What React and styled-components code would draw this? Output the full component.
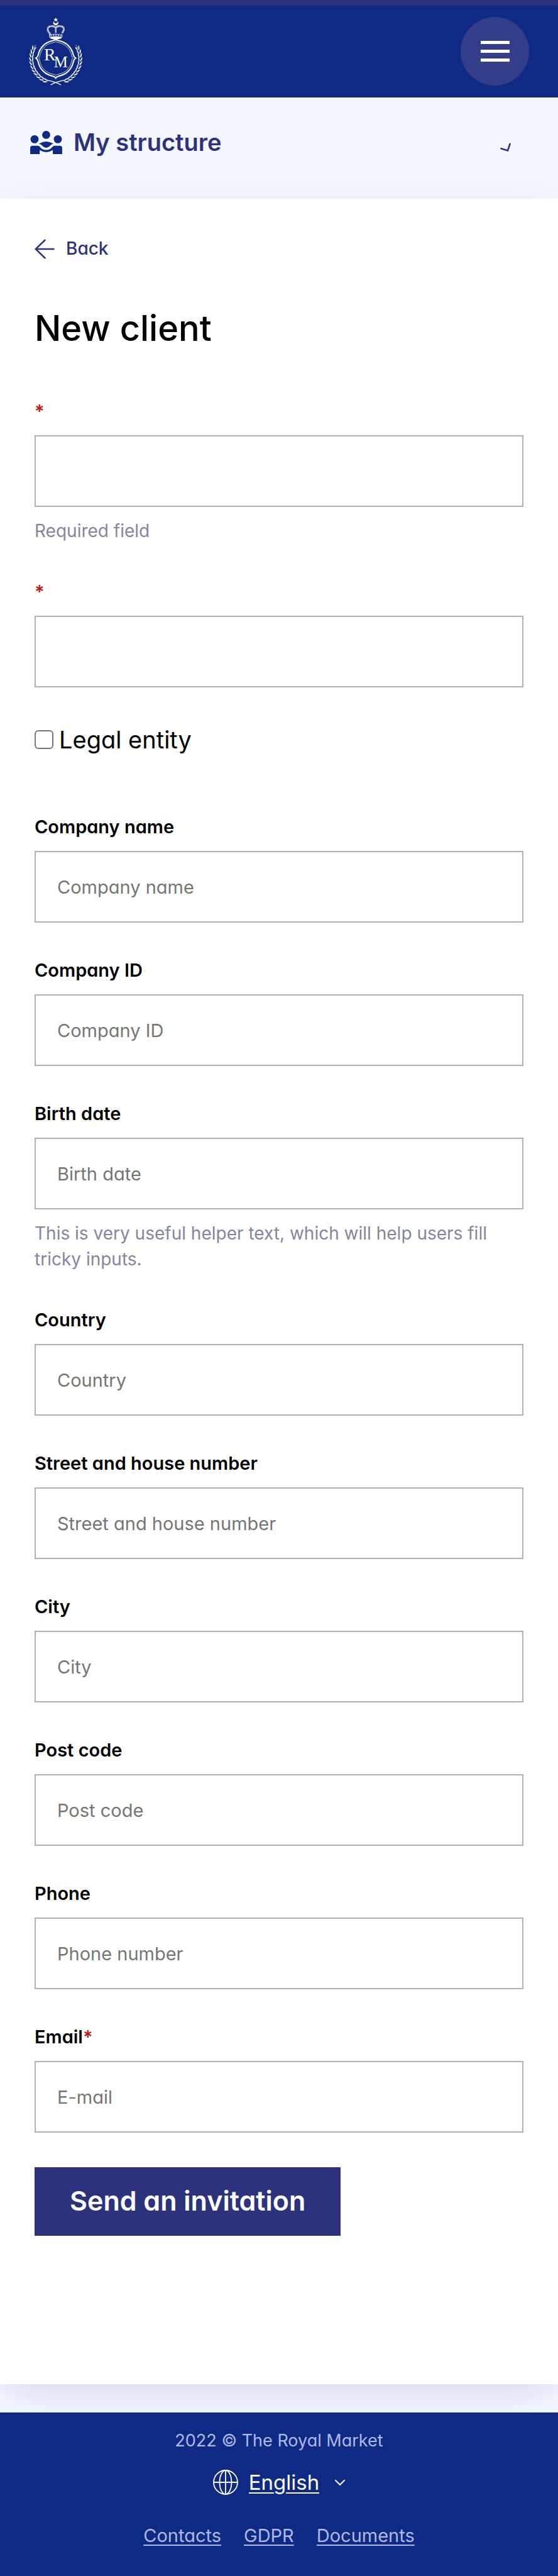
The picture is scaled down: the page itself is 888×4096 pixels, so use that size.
import React from "react";
import styled, { createGlobalStyle } from "styled-components";

const color = {
  navy: "#0f2a84",
  indigo: "#2c337c",
  disc: "#333d89",
  page: "#f4f7ff",
  line: "#b0b0b0",
  muted: "#84869f",
  footerText: "#afb9e3",
  required: "#c11717",
};

const GlobalStyle = createGlobalStyle`
  *, *::before, *::after { box-sizing: border-box; }
  body {
    margin: 0;
    background: ${color.page};
    color: #000;
    font-family: Inter, "Open Sans", sans-serif;
    font-feature-settings: "cv11";
    font-size: 28px;
    line-height: 41px;
  }
  input, button, select { font: inherit; font-feature-settings: inherit; margin: 0; }
`;

const Header = styled.header`
  display: flex;
  align-items: center;
  justify-content: space-between;
  padding: 18px 46px 19px;
  border-top: 9px solid ${color.indigo};
  background: ${color.navy};
`;

const HomeLink = styled.a`
  display: flex;
  color: #fff;
`;

const MenuButton = styled.button`
  display: flex;
  flex-direction: column;
  align-items: center;
  justify-content: center;
  gap: 9px;
  width: 109px;
  height: 109px;
  padding: 0;
  border: 0;
  border-radius: 50%;
  background: ${color.disc};
`;

const MenuBar = styled.span`
  width: 46px;
  height: 5px;
  background: #fff;
`;

const SectionBar = styled.div`
  display: flex;
  align-items: center;
  padding: 43px 46px 62px 48px;
  color: ${color.navy};
`;

const SectionTitle = styled.h2`
  flex: 1;
  margin: 0 0 0 18px;
  color: ${color.indigo};
  font-size: 38px;
  font-weight: 600;
  line-height: 56px;
`;

const Card = styled.main`
  padding: 59px 55px 236px;
  margin-bottom: 45px;
  background: #fff;
  box-shadow: 0 16px 58px -10px rgba(44, 51, 124, 0.18);
`;

const BackLink = styled.a`
  display: inline-flex;
  align-items: center;
  gap: 18px;
  color: ${color.indigo};
  font-weight: 500;
  text-decoration: none;
  vertical-align: top;
`;

const PageTitle = styled.h1`
  margin: 66px 0 71px;
  font-size: 56px;
  font-weight: 500;
  line-height: 80px;
`;

const Form = styled.form`
  display: flex;
  flex-direction: column;
  align-items: stretch;
  gap: 55px;
`;

const Field = styled.div`
  display: flex;
  flex-direction: column;
  gap: 18px;
`;

const Label = styled.label`
  font-size: 29px;
  font-weight: 600;
`;

const Required = styled.span`
  color: ${color.required};
`;

const TextInput = styled.input`
  width: 100%;
  height: 114px;
  padding: 0 34px;
  border: 2px solid ${color.line};
  border-radius: 0;
  background: #fff;
  font-size: 29px;
  &::placeholder { color: #757575; opacity: 1; }
`;

const Hint = styled.p`
  margin: 0;
  color: ${color.muted};
`;

const CheckRow = styled.label`
  display: flex;
  align-items: center;
  gap: 9px;
  margin-bottom: 35px;
  font-size: 38px;
  line-height: 56px;
`;

const Checkbox = styled.input`
  appearance: none;
  width: 30px;
  height: 30px;
  border: 2px solid #767676;
  border-radius: 6px;
  background: #fff;
  &:checked { background: ${color.indigo}; }
`;

const SubmitButton = styled.button`
  align-self: flex-start;
  padding: 25px 56px 27px;
  border: 0;
  background: ${color.indigo};
  color: #fff;
  font-size: 43px;
  font-weight: 600;
  line-height: 57px;
`;

const Footer = styled.footer`
  display: flex;
  flex-direction: column;
  align-items: center;
  padding: 24px 46px 44px;
  background: ${color.navy};
  color: ${color.footerText};
`;

const Copyright = styled.p`
  margin: 0;
  font-size: 27px;
`;

const Language = styled.div`
  display: flex;
  align-items: center;
  margin: 22px 0 40px;
  color: #fff;
`;

const LanguageSelect = styled.select`
  appearance: none;
  field-sizing: content;
  margin: 0 25px 0 17px;
  padding: 0;
  border: 0;
  background: transparent;
  color: inherit;
  font-size: 33px;
  line-height: 48px;
  text-decoration: underline;
  text-decoration-thickness: 2px;
  text-underline-offset: 4px;
`;

const FooterLinks = styled.nav`
  display: flex;
  gap: 36px;
`;

const FooterLink = styled.a`
  color: inherit;
  font-size: 29px;
  text-decoration-thickness: 2px;
  text-underline-offset: 4px;
`;

const WREATH = Array.from({ length: 11 }, (_, i) => 111 + i * 9);

function Wreath() {
  return (
    <g>
      {WREATH.map((deg) => {
        const rad = (deg * Math.PI) / 180;
        const x = 229 + 152 * Math.cos(rad);
        const y = 306 + 152 * Math.sin(rad);
        return (
          <g key={deg} transform={`translate(${x} ${y}) rotate(${deg - 180})`}>
            <path d="M-1 4Q-16 -6 -13 -29Q-2 -16 -1 4Z" />
            <path d="M3 4Q0 -14 12 -27Q14 -9 3 4Z" />
          </g>
        );
      })}
      <path d="M92 240Q94 228 104 219" fill="none" stroke="currentColor" strokeWidth="3" />
      <path d="M170 440Q222 448 261 470" fill="none" stroke="currentColor" strokeWidth="5" />
    </g>
  );
}

const CROWN_ARCHES =
  "M193 148Q181 136 178 122Q178 101 204 101Q223 101 229 110Q235 101 254 101Q280 101 280 122Q277 136 265 148";

function Logo() {
  return (
    <svg width="86" height="108" viewBox="60 48 340 426" fill="currentColor" role="img" aria-label="The Royal Market">
      <path d="M229 47l4 9 10 1-8 6 3 10-9-6-9 6 3-10-8-6 10-1z" />
      <path d="M216 70A16 16 0 1 0 242 70A12 12 0 1 1 216 70Z" />
      <g fill="none" stroke="currentColor">
        <path d={CROWN_ARCHES} strokeWidth="12" strokeLinecap="round" strokeDasharray="0 10" />
        <path d={CROWN_ARCHES} stroke={color.navy} strokeWidth="5" strokeLinecap="round" strokeDasharray="0 10" />
        <path d="M229 112V148" strokeWidth="10" strokeLinecap="round" strokeDasharray="0 9" />
        <path d="M229 112V148" stroke={color.navy} strokeWidth="4" strokeLinecap="round" strokeDasharray="0 9" />
        <path d="M189 156Q229 146 269 156M192 170Q229 160 266 170" strokeWidth="3" />
        <path d="M197 161Q229 154 261 161" strokeWidth="6" strokeDasharray="7 8" />
        <path d="M190 152V172M268 152V172" strokeWidth="4" />
        <path d="M229 186Q237 192 249 193A113 113 0 0 1 340 284Q344 297 354 302Q344 308 340 324A113 113 0 0 1 249 415Q235 418 229 428Q223 418 209 415A113 113 0 0 1 118 324Q114 308 104 302Q114 297 118 284A113 113 0 0 1 209 193Q221 192 229 186Z" strokeWidth="8" />
        <path d="M229 198Q236 204 247 205A101 101 0 0 1 329 286Q331 297 336 302Q331 308 329 322A101 101 0 0 1 247 403Q236 405 229 410Q222 405 211 403A101 101 0 0 1 129 322Q127 308 122 302Q127 297 129 286A101 101 0 0 1 211 205Q222 204 229 198Z" strokeWidth="3" />
      </g>
      <path d="M191 172Q229 162 267 172Q264 181 242 184L229 190L216 184Q194 181 191 172Z" />
      <g fontFamily="Liberation Serif, serif">
        <text x="155" y="318" fontSize="110">R</text>
        <text x="217" y="359" fontSize="98">M</text>
      </g>
      <Wreath />
      <g transform="translate(458 0) scale(-1 1)">
        <Wreath />
      </g>
    </svg>
  );
}

function TeamIcon() {
  return (
    <svg width="51" height="37" viewBox="189 828 198 144" fill="currentColor" aria-hidden="true">
      <circle cx="216" cy="880" r="25" />
      <circle cx="288" cy="853" r="25" />
      <circle cx="360" cy="880" r="25" />
      <path d="M243 908Q288 880 333 908Q319 911 311 921Q288 945 265 921Q257 911 243 908Z" />
      <path d="M189 972V934Q189 920 203 920H236Q244 920 249 927Q264 947 288 947Q312 947 327 927Q332 920 340 920H373Q387 920 387 934V972H329V947Q288 974 248 947V972Z" />
    </svg>
  );
}

function LoadingMark() {
  return (
    <svg width="56" height="56" viewBox="0 0 56 56" fill="none" stroke={color.indigo} strokeWidth="2.6" strokeLinecap="round" aria-hidden="true">
      <path d="M11.5 38.2L22 41.4L25.5 30.8" />
    </svg>
  );
}

function BackArrow() {
  return (
    <svg width="32" height="32" viewBox="36 62 126 128" fill="none" stroke="currentColor" strokeWidth="10" strokeLinecap="round" aria-hidden="true">
      <path d="M157 126H43M101 69L42 126L101 183" />
    </svg>
  );
}

function GlobeIcon() {
  return (
    <svg width="40" height="40" viewBox="0 0 40 40" fill="none" stroke="currentColor" strokeWidth="1.8" aria-hidden="true">
      <circle cx="20" cy="20" r="19" />
      <ellipse cx="20" cy="20" rx="9.5" ry="19" />
      <path d="M20 1V39M1 20H39" />
    </svg>
  );
}

function ChevronIcon() {
  return (
    <svg width="16" height="9" viewBox="0 0 16 9" fill="none" stroke="currentColor" strokeWidth="2" strokeLinecap="round" strokeLinejoin="round" aria-hidden="true">
      <path d="M1 1L8 8L15 1" />
    </svg>
  );
}

function FormField({ id, label, placeholder, required, hint, type = "text", name }) {
  return (
    <Field>
      <Label htmlFor={id}>
        {label}
        {required && <Required>*</Required>}
      </Label>
      <TextInput id={id} type={type} placeholder={placeholder} aria-label={name} aria-describedby={hint ? `${id}-hint` : undefined} />
      {hint && <Hint id={`${id}-hint`}>{hint}</Hint>}
    </Field>
  );
}

const DETAILS = [
  { id: "company", label: "Company name", placeholder: "Company name" },
  { id: "company-id", label: "Company ID", placeholder: "Company ID" },
  {
    id: "birth",
    label: "Birth date",
    placeholder: "Birth date",
    hint: "This is very useful helper text, which will help users fill tricky inputs.",
  },
  { id: "country", label: "Country", placeholder: "Country" },
  { id: "street", label: "Street and house number", placeholder: "Street and house number" },
  { id: "city", label: "City", placeholder: "City" },
  { id: "post", label: "Post code", placeholder: "Post code" },
  { id: "phone", label: "Phone", placeholder: "Phone number", type: "tel" },
  { id: "email", label: "Email", placeholder: "E-mail", type: "email", required: true },
];

export default function App() {
  return (
    <>
      <GlobalStyle />
      <Header>
        <HomeLink href="#home">
          <Logo />
        </HomeLink>
        <MenuButton type="button" aria-label="Menu">
          <MenuBar />
          <MenuBar />
          <MenuBar />
        </MenuButton>
      </Header>
      <SectionBar>
        <TeamIcon />
        <SectionTitle>My structure</SectionTitle>
        <LoadingMark />
      </SectionBar>
      <Card>
        <BackLink href="#back">
          <BackArrow />
          Back
        </BackLink>
        <PageTitle>New client</PageTitle>
        <Form onSubmit={(e) => e.preventDefault()}>
          <FormField id="first-name" name="First name" required hint="Required field" />
          <FormField id="last-name" name="Last name" required />
          <CheckRow>
            <Checkbox type="checkbox" />
            Legal entity
          </CheckRow>
          {DETAILS.map((field) => (
            <FormField key={field.id} {...field} />
          ))}
          <SubmitButton type="submit">Send an invitation</SubmitButton>
        </Form>
      </Card>
      <Footer>
        <Copyright>2022 © The Royal Market</Copyright>
        <Language>
          <GlobeIcon />
          <LanguageSelect aria-label="Language">
            <option>English</option>
          </LanguageSelect>
          <ChevronIcon />
        </Language>
        <FooterLinks>
          <FooterLink href="#contacts">Contacts</FooterLink>
          <FooterLink href="#gdpr">GDPR</FooterLink>
          <FooterLink href="#documents">Documents</FooterLink>
        </FooterLinks>
      </Footer>
    </>
  );
}
